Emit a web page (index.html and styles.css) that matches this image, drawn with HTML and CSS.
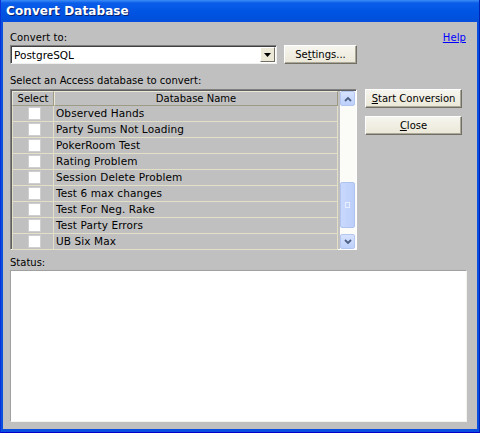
FILE: index.html
```html
<!DOCTYPE html>
<html>
<head>
<meta charset="utf-8">
<link rel="stylesheet" href="styles.css">
</head>
<body>
<div class="window">
  <div class="titlebar"><span class="title">Convert Database</span></div>
  <div class="body">
    <div class="line1"><span>Convert to:</span><a class="help" href="#">Help</a></div>
    <div class="convert-row">
      <div class="select">
        <span class="select-value">PostgreSQL</span>
        <span class="dd-btn"><svg width="7" height="4" viewBox="0 0 7 4"><path d="M0 0h7L3.5 4z" fill="#000"/></svg></span>
      </div>
      <button class="btn settings">Se<u>t</u>tings...</button>
    </div>
    <div class="label2">Select an Access database to convert:</div>
    <div class="main-row">
      <div class="grid">
        <div class="table">
          <div class="hrow"><div class="hc sel">Select</div><div class="hc name">Database Name</div></div>
          <div class="row"><div class="c sel"><span class="cb"></span></div><div class="c name">Observed Hands</div></div>
          <div class="row"><div class="c sel"><span class="cb"></span></div><div class="c name">Party Sums Not Loading</div></div>
          <div class="row"><div class="c sel"><span class="cb"></span></div><div class="c name">PokerRoom Test</div></div>
          <div class="row"><div class="c sel"><span class="cb"></span></div><div class="c name">Rating Problem</div></div>
          <div class="row"><div class="c sel"><span class="cb"></span></div><div class="c name">Session Delete Problem</div></div>
          <div class="row"><div class="c sel"><span class="cb"></span></div><div class="c name">Test 6 max changes</div></div>
          <div class="row"><div class="c sel"><span class="cb"></span></div><div class="c name">Test For Neg. Rake</div></div>
          <div class="row"><div class="c sel"><span class="cb"></span></div><div class="c name">Test Party Errors</div></div>
          <div class="row"><div class="c sel"><span class="cb"></span></div><div class="c name">UB Six Max</div></div>
        </div>
        <div class="scrollbar">
          <div class="sb-btn"><svg width="8" height="6" viewBox="0 0 8 6"><path d="M1 5L4 2L7 5" fill="none" stroke="#4d6185" stroke-width="1.8"/></svg></div>
          <div class="sb-space"></div>
          <div class="sb-thumb"><span class="grip"></span></div>
          <div class="sb-rest"></div>
          <div class="sb-btn"><svg width="8" height="6" viewBox="0 0 8 6"><path d="M1 1L4 4L7 1" fill="none" stroke="#4d6185" stroke-width="1.8"/></svg></div>
        </div>
      </div>
      <div class="actions">
        <button class="btn big"><u>S</u>tart Conversion</button>
        <button class="btn big"><u>C</u>lose</button>
      </div>
    </div>
    <div class="status-label">Status:</div>
    <div class="status-box"></div>
  </div>
</div>
</body>
</html>
```
FILE: styles.css
```css
html, body {
  margin: 0;
  padding: 0;
}
body {
  width: 480px;
  height: 433px;
  overflow: hidden;
  font-family: "DejaVu Sans", sans-serif;
  font-size: 10px;
  color: #000;
}
.window {
  width: 480px;
  height: 433px;
  box-sizing: border-box;
  background: #0a4ee0;
  display: flex;
  flex-direction: column;
  border-left: 1px solid #0831d9;
  border-right: 1px solid #0022b5;
  border-bottom: 1px solid #0000c8;
}
.titlebar {
  height: 22px;
  flex: none;
  background: linear-gradient(#3d8cf7 0, #0a5de8 3px, #0054e3 12px, #0050da 20px, #0a4ee0 22px);
  display: flex;
  align-items: center;
  padding-left: 5px;
}
.title {
  color: #fff;
  font-weight: bold;
  font-size: 12px;
  font-family: "DejaVu Sans", sans-serif;
  text-shadow: 1px 1px 0 #0a1e6a;
  letter-spacing: 0.1px;
}
.body {
  flex: 1;
  margin: 0 2px 3px 2px;
  background: #c0c0c0;
  padding: 9px 10px 7px 7px;
  display: flex;
  flex-direction: column;
}
.line1 {
  display: flex;
  justify-content: space-between;
  height: 13px;
  line-height: 13px;
  padding-right: 1px;
  letter-spacing: 0.1px;
}
.help {
  color: #0000ff;
  text-decoration: underline;
}
.convert-row {
  display: flex;
  margin-top: 1px;
  gap: 7px;
}
.select {
  width: 267px;
  height: 19px;
  box-sizing: border-box;
  background: #fff;
  border-style: solid;
  border-width: 1px;
  border-color: #7f7f7f #f0f0f0 #f0f0f0 #7f7f7f;
  box-shadow: inset 1px 1px 0 #404040;
  display: flex;
  align-items: center;
  justify-content: space-between;
  padding: 1px 1px 0 3px;
}
.select-value {
  line-height: 15px;
  font-size: 10.5px;
}
.dd-btn {
  width: 15px;
  height: 15px;
  box-sizing: border-box;
  background: #ece9d8;
  border-style: solid;
  border-width: 1px;
  border-color: #fff #716f64 #716f64 #fff;
  display: flex;
  align-items: center;
  justify-content: center;
  margin-top: -1px;
}
.btn {
  font-family: "DejaVu Sans", sans-serif;
  font-size: 10px;
  color: #000;
  height: 19px;
  box-sizing: border-box;
  background: linear-gradient(#f6f5ee, #ebe8d8);
  border-style: solid;
  border-width: 1px;
  border-color: #ffffff #716f64 #716f64 #ffffff;
  box-shadow: inset -1px -1px 0 #aca899;
  padding: 0;
  margin: 0;
  line-height: 16px;
  white-space: nowrap;
}
.settings {
  width: 73px;
}
.label2 {
  margin-top: 10px;
  height: 13px;
  line-height: 13px;
}
.main-row {
  display: flex;
  margin-top: 2px;
  gap: 8px;
}
.grid {
  width: 347px;
  height: 161px;
  box-sizing: border-box;
  border-style: solid;
  border-width: 1px;
  border-color: #808080 #ffffff #ffffff #808080;
  box-shadow: inset 1px 1px 0 #606060;
  display: flex;
  padding: 1px 0 0 1px;
  background: #c0c0c0;
}
.table {
  flex: 1;
  padding-right: 2px;
}
.hrow, .row {
  display: flex;
}
.hc {
  height: 15px;
  line-height: 14px;
  box-sizing: border-box;
  text-align: center;
  border-style: solid;
  border-width: 1px;
  border-color: #ece9d8 #9d9a86 #9d9a86 #ece9d8;
}
.sel {
  width: 42px;
  flex: none;
}
.name {
  flex: 1;
}
.c {
  height: 16px;
  box-sizing: border-box;
  border-right: 1px solid #e4e0c8;
  border-bottom: 1px solid #e4e0c8;
  line-height: 15px;
}
.c.sel {
  border-left: 1px solid #e4e0c8;
  display: flex;
  align-items: center;
  justify-content: center;
  padding-left: 3px;
}
.c.name {
  padding-left: 2px;
  font-size: 10.5px;
  letter-spacing: 0.1px;
}
.cb {
  width: 13px;
  height: 13px;
  box-sizing: border-box;
  background: #fff;
  border: 1px solid #cfcfcf;
  display: block;
}
.scrollbar {
  width: 16px;
  flex: none;
  background: #fbfbf8;
  display: flex;
  flex-direction: column;
}
.sb-btn {
  height: 15px;
  box-sizing: border-box;
  margin: 0 1px 0 0;
  background: linear-gradient(#d6e2fd, #bdd0fa);
  border: 1px solid #b3c6f2;
  border-radius: 2px;
  display: flex;
  align-items: center;
  justify-content: center;
}
.sb-space {
  height: 76px;
}
.sb-thumb {
  height: 46px;
  box-sizing: border-box;
  margin-right: 1px;
  background: linear-gradient(90deg, #c9d8fc, #bccffa);
  border: 1px solid #aec3f0;
  border-radius: 2px;
  display: flex;
  align-items: center;
  justify-content: center;
}
.grip {
  width: 5px;
  height: 6px;
  border: 1px solid #e8eefe;
  box-sizing: border-box;
}
.sb-rest {
  flex: 1;
}
.actions {
  display: flex;
  flex-direction: column;
  gap: 8px;
}
.big {
  width: 97px;
}
.status-label {
  margin-top: 6px;
  height: 13px;
  line-height: 13px;
}
.status-box {
  margin-top: 1px;
  flex: 1;
  background: #fff;
  border-style: solid;
  border-width: 1px;
  border-color: #a0a0a0 #f4f4ee #f4f4ee #a0a0a0;
}
```
